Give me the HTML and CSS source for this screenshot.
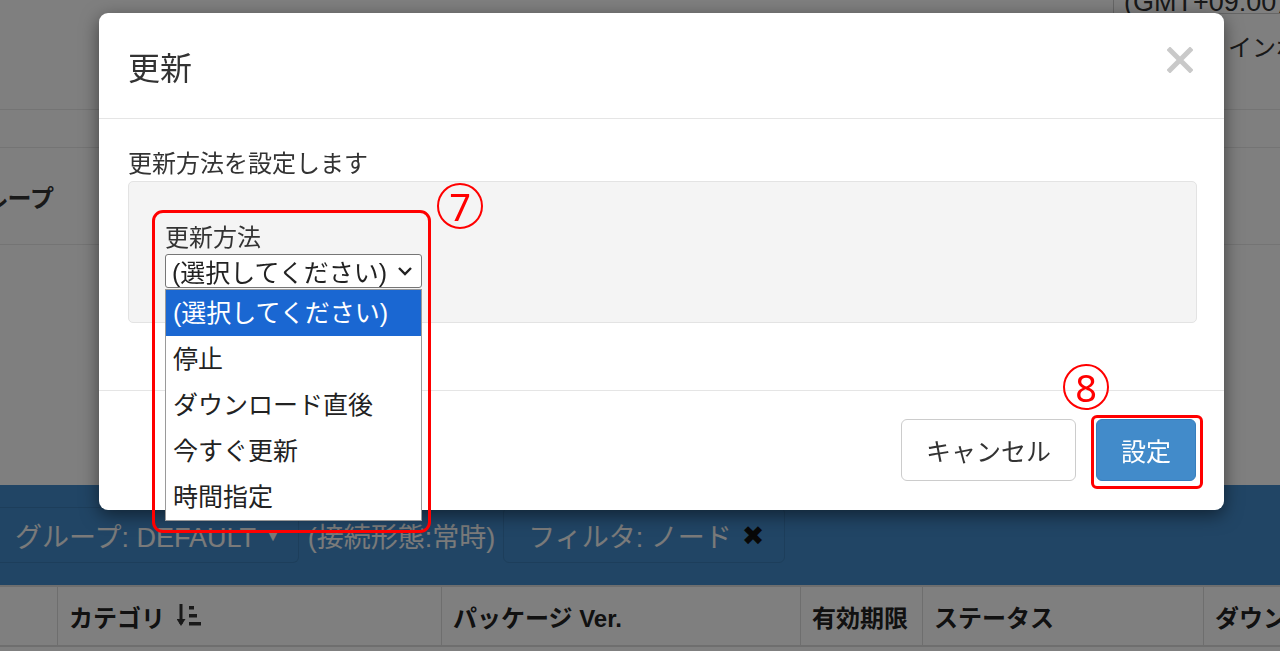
FILE: index.html
```html
<!DOCTYPE html>
<html lang="ja">
<head>
    <meta charset="UTF-8">
    <meta name="viewport" content="width=device-width, initial-scale=1.0">
    <title>更新</title>
    <link rel="stylesheet" href="styles.css">
</head>
<body>
    <div class="page">
        <div class="top">
            <div class="tz-row"><div class="tz">(GMT+09:00) 大阪、札幌、東京</div></div>
            <div class="top-row"><span class="top-link">インポート</span></div>
        </div>
        <div class="row row-thin"></div>
        <div class="row row-group">
            <div class="cell-label"><span>グループ</span></div>
        </div>
        <div class="spacer"></div>
        <div class="filterbar">
            <div class="chip chip-first">グループ: DEFAULT <span class="caret">▼</span></div>
            <div class="chip chip-plain">(接続形態:常時)</div>
            <div class="chip chip-filter">フィルタ: ノード <span class="chip-x">✖</span></div>
        </div>
        <div class="thead">
            <div class="th"></div>
            <div class="th">カテゴリ
                <svg class="sort-icon" width="26" height="26" viewBox="0 0 26 26">
                    <path d="M4 1 V21" stroke="#333" stroke-width="3" fill="none"/>
                    <path d="M-0.5 16 L4 23 L8.5 16 Z" fill="#333"/>
                    <rect x="12" y="3" width="5" height="3.5" fill="#333"/>
                    <rect x="12" y="11" width="8" height="3.5" fill="#333"/>
                    <rect x="12" y="19" width="12" height="3.5" fill="#333"/>
                </svg>
            </div>
            <div class="th">パッケージ Ver.</div>
            <div class="th">有効期限</div>
            <div class="th">ステータス</div>
            <div class="th">ダウンロード</div>
        </div>
    </div>

    <div class="backdrop"></div>

    <div class="modal">
        <div class="modal-header">
            <h4 class="modal-title">更新</h4>
            <svg class="close" width="26" height="26" viewBox="0 0 26 26">
                <path d="M3 3 L23 23 M23 3 L3 23" stroke="#c9c9c9" stroke-width="5" stroke-linecap="square"/>
            </svg>
        </div>
        <div class="modal-body">
            <p class="lead-text">更新方法を設定します</p>
            <div class="well">
                <div class="field-label">更新方法</div>
                <div class="select-wrap">
                    <div class="select">
                        <span>(選択してください)</span>
                        <svg width="16" height="10" viewBox="0 0 16 10">
                            <polyline points="2,2 8,8 14,2" stroke="#222" stroke-width="2.4" fill="none"/>
                        </svg>
                    </div>
                    <ul class="options">
                        <li class="selected">(選択してください)</li>
                        <li>停止</li>
                        <li>ダウンロード直後</li>
                        <li>今すぐ更新</li>
                        <li>時間指定</li>
                    </ul>
                </div>
            </div>
        </div>
        <div class="modal-footer">
            <button class="btn btn-default">キャンセル</button>
            <button class="btn btn-primary">設定</button>
        </div>
    </div>

    <div class="mark mark-select"></div>
    <div class="mark-num num-7">7</div>
    <div class="mark mark-button"></div>
    <div class="mark-num num-8">8</div>
</body>
</html>
```

FILE: styles.css
```css
body {
    margin: 0;
    overflow: hidden;
    font-family: 'Liberation Sans', 'Noto Sans CJK JP', sans-serif;
    color: #333;
    background: #fff;
}
.page {
    width: 1280px;
    height: 651px;
}
.top {
    height: 110px;
    border-bottom: 1px solid #e8e8e8;
    box-sizing: border-box;
}
.tz-row {
    height: 14px;
    display: flex;
    justify-content: flex-end;
    overflow: visible;
}
.tz {
    width: 167px;
    flex-shrink: 0;
    height: 34px;
    margin-top: -20px;
    border: 1px solid #ccc;
    border-right: none;
    box-sizing: border-box;
    padding-left: 10px;
    font-size: 27px;
    line-height: 42px;
    white-space: nowrap;
    overflow: hidden;
}
.top-row {
    display: flex;
    justify-content: flex-end;
    margin-top: 19px;
}
.top-link {
    width: 52px;
    overflow: hidden;
    white-space: nowrap;
    font-size: 24px;
    line-height: 30px;
}
.row {
    border-bottom: 1px solid #e8e8e8;
    box-sizing: border-box;
}
.row-thin {
    height: 38px;
}
.row-group {
    height: 97px;
    display: flex;
    align-items: center;
}
.cell-label {
    width: 54px;
    display: flex;
    justify-content: flex-end;
    overflow: hidden;
    white-space: nowrap;
    font-size: 24px;
    font-weight: bold;
}
.spacer {
    height: 240px;
}
.filterbar {
    height: 100px;
    background: #428bca;
    display: flex;
    align-items: flex-end;
    padding-bottom: 22px;
    box-sizing: border-box;
    color: #f4f4f4;
    font-size: 27px;
}
.chip {
    height: 56px;
    display: flex;
    align-items: center;
    box-sizing: border-box;
    white-space: nowrap;
}
.chip-first {
    padding: 0 16px 0 15px;
    border: 1px solid #3a7cb6;
    border-left: none;
    border-radius: 0 6px 6px 0;
}
.chip-plain {
    padding: 0 8px 0 9px;
}
.chip-filter {
    padding: 0 20px 0 24px;
    border: 1px solid #3a7cb6;
    border-radius: 6px;
}
.caret {
    font-size: 18px;
    margin-left: 8px;
}
.chip-x {
    color: #111;
    font-family: 'DejaVu Sans', sans-serif;
    font-size: 27px;
    margin-left: 10px;
}
.thead {
    height: 62px;
    display: grid;
    grid-template-columns: 57px 384px 359px 122px 281px 1fr;
    border-top: 2px solid #ddd;
    border-bottom: 2px solid #ddd;
    box-sizing: border-box;
    font-size: 24px;
    font-weight: bold;
    color: #222;
}
.th {
    border-left: 1px solid #ddd;
    padding-left: 11px;
    display: flex;
    align-items: center;
    white-space: nowrap;
    overflow: hidden;
}
.th:first-child {
    border-left: none;
}
.sort-icon {
    margin-left: 12px;
}
.backdrop {
    position: fixed;
    inset: 0;
    background: rgba(0, 0, 0, 0.5);
}
.modal {
    position: absolute;
    left: 99px;
    top: 13px;
    width: 1125px;
    background: #fff;
    border-radius: 9px;
    box-shadow: 0 5px 18px rgba(0, 0, 0, 0.5);
}
.modal-header {
    height: 106px;
    padding: 36px 31px 0 29px;
    box-sizing: border-box;
    border-bottom: 1px solid #e5e5e5;
    display: flex;
    justify-content: space-between;
    align-items: flex-start;
}
.modal-title {
    margin: 0;
    font-size: 32px;
    line-height: 40px;
    font-weight: normal;
    color: #333;
}
.close {
    margin-top: -2px;
}
.modal-body {
    padding: 30px 27px 67px 29px;
}
.lead-text {
    margin: 0;
    font-size: 24px;
    line-height: 30px;
}
.well {
    margin-top: 2px;
    height: 142px;
    box-sizing: border-box;
    padding: 41px 36px 0;
    background: #f4f4f4;
    border: 1px solid #e3e3e3;
    border-radius: 5px;
}
.field-label {
    font-size: 24px;
    line-height: 30px;
}
.select-wrap {
    position: relative;
    width: 257px;
}
.select {
    height: 34px;
    box-sizing: border-box;
    margin-top: 1px;
    border: 1px solid #767676;
    border-radius: 3px;
    background: #fff;
    padding: 0 8px 0 6px;
    display: flex;
    justify-content: space-between;
    align-items: center;
    font-size: 25px;
    color: #222;
    white-space: nowrap;
}
.options {
    position: absolute;
    left: 0;
    top: calc(100% + 1px);
    width: 257px;
    margin: 0;
    padding: 0;
    list-style: none;
    background: #fff;
    border: 1px solid #9a9a9a;
    box-sizing: border-box;
    z-index: 2;
}
.options li {
    height: 46px;
    line-height: 46px;
    padding-left: 7px;
    font-size: 25px;
    color: #222;
    white-space: nowrap;
}
.options li.selected {
    background: #1a67d2;
    color: #fff;
}
.modal-footer {
    border-top: 1px solid #e5e5e5;
    padding: 28px 28px 29px;
    display: flex;
    justify-content: flex-end;
    gap: 20px;
}
.btn {
    height: 62px;
    padding: 0 24px;
    font-family: inherit;
    font-size: 25px;
    border-radius: 6px;
    cursor: pointer;
}
.btn-default {
    background: #fff;
    border: 1px solid #ccc;
    color: #333;
}
.btn-primary {
    background: #428bca;
    border: 1px solid #357ebd;
    color: #fff;
}
.mark {
    position: absolute;
    border: 3px solid #f00;
    box-sizing: border-box;
    z-index: 3;
}
.mark-select {
    left: 152px;
    top: 210px;
    width: 279px;
    height: 323px;
    border-radius: 11px;
}
.mark-button {
    left: 1091px;
    top: 415px;
    width: 112px;
    height: 74px;
    border-radius: 6px;
}
.mark-num {
    position: absolute;
    width: 46px;
    height: 46px;
    box-sizing: border-box;
    border: 2px solid #f00;
    border-radius: 50%;
    color: #f00;
    font-family: 'Noto Sans', sans-serif;
    font-size: 38px;
    line-height: 42px;
    text-align: center;
    z-index: 3;
}
.num-7 {
    left: 437px;
    top: 183px;
}
.num-8 {
    left: 1063px;
    top: 364px;
}
```
